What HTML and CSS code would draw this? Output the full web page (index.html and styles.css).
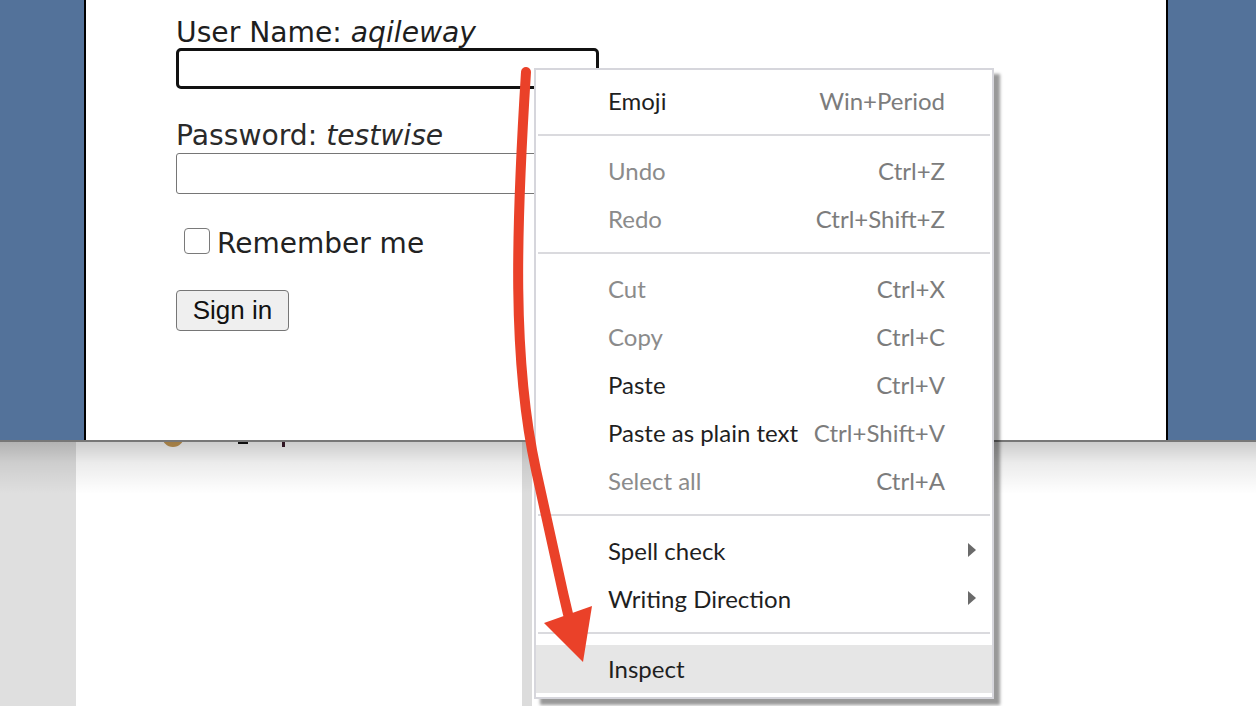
FILE: index.html
```html
<!DOCTYPE html>
<html>
<head>
<meta charset="utf-8">
<title>Sign in</title>
<link rel="stylesheet" href="styles.css">
</head>
<body>
<div class="top">
  <div class="panel">
    <form class="login">
      <div class="field">
        <label class="label">User Name: <i>aqileway</i></label>
        <input class="input input-focus" type="text">
      </div>
      <div class="field field-pw">
        <label class="label">Password: <i>testwise</i></label>
        <input class="input" type="password">
      </div>
      <div class="remember">
        <input class="check" type="checkbox">
        <span class="remember-text">Remember me</span>
      </div>
      <button class="signin" type="button">Sign in</button>
    </form>
  </div>
</div>
<div class="bottom">
  <div class="side"></div>
  <div class="main">
    <div class="peek">
      <span class="peek-dot"></span>
      <span class="peek-dash"></span>
      <span class="peek-tick"></span>
    </div>
  </div>
  <div class="gutter"></div>
  <div class="rest"></div>
  <div class="shade"></div>
</div>

<div class="menu">
  <div class="item"><span class="name">Emoji</span><span class="key">Win+Period</span></div>
  <div class="sep"></div>
  <div class="item off"><span class="name">Undo</span><span class="key">Ctrl+Z</span></div>
  <div class="item off"><span class="name">Redo</span><span class="key">Ctrl+Shift+Z</span></div>
  <div class="sep"></div>
  <div class="item off"><span class="name">Cut</span><span class="key">Ctrl+X</span></div>
  <div class="item off"><span class="name">Copy</span><span class="key">Ctrl+C</span></div>
  <div class="item"><span class="name">Paste</span><span class="key">Ctrl+V</span></div>
  <div class="item"><span class="name">Paste as plain text</span><span class="key">Ctrl+Shift+V</span></div>
  <div class="item off"><span class="name">Select all</span><span class="key">Ctrl+A</span></div>
  <div class="sep"></div>
  <div class="item sub"><span class="name">Spell check</span><span class="caret"></span></div>
  <div class="item sub"><span class="name">Writing Direction</span><span class="caret"></span></div>
  <div class="sep"></div>
  <div class="item hover"><span class="name">Inspect</span></div>
</div>

<svg class="arrow" width="1256" height="706" viewBox="0 0 1256 706">
  <path d="M526,72 C516,230 512,360 536,470 S 560,580 568,614" fill="none" stroke="#ea4129" stroke-width="10" stroke-linecap="round"/>
  <polygon points="544,623 592,606 583,662" fill="#ea4129"/>
</svg>
</body>
</html>
```
FILE: styles.css
```css
* { box-sizing: border-box; }
html, body { margin: 0; padding: 0; }
body {
  width: 1256px;
  height: 706px;
  overflow: hidden;
  background: #ffffff;
  position: relative;
  font-family: "DejaVu Sans", Verdana, sans-serif;
}

.top {
  height: 440px;
  background: #53729a;
  padding-left: 84px;
}
.panel {
  width: 1084px;
  height: 440px;
  background: #ffffff;
  border-left: 2px solid #000;
  border-right: 2px solid #000;
  padding: 18px 0 0 90px;
}
.login {
  display: flex;
  flex-direction: column;
  align-items: flex-start;
}
.field {
  display: flex;
  flex-direction: column;
}
.field-pw { margin-top: 32px; }
.label {
  font-size: 28.2px;
  line-height: 30px;
  color: #1e1e1e;
}
.field-pw .label { margin-bottom: 2px; color: #2a2a2a; }
.label i { font-style: italic; }
.input {
  width: 423px;
  height: 41px;
  margin: 0;
  border: 1.5px solid #767676;
  border-radius: 3px;
  background: #fff;
  outline: none;
}
.input-focus {
  border: 3px solid #111;
  border-radius: 5px;
}
.remember {
  display: flex;
  align-items: flex-start;
  margin-top: 34px;
}
.check {
  appearance: none;
  -webkit-appearance: none;
  width: 26px;
  height: 26px;
  margin: 0 7px 0 8px;
  border: 1.5px solid #7a7a7a;
  border-radius: 4px;
  background: #fff;
}
.remember-text {
  font-size: 28px;
  line-height: 30px;
  margin-top: 1px;
  color: #222;
}
.signin {
  margin-top: 31px;
  width: 113px;
  height: 41px;
  padding: 0;
  background: #efefef;
  border: 1.5px solid #767676;
  border-radius: 4px;
  font-family: "Liberation Sans", Arial, sans-serif;
  font-size: 26px;
  color: #111;
}

.bottom {
  position: relative;
  height: 266px;
  border-top: 2px solid #777;
  display: grid;
  grid-template-columns: 76px 446px 10px 1fr;
  overflow: hidden;
}
.side { background: #dfdfdf; }
.main { background: #fff; }
.gutter { background: #dcdcdc; }
.rest { background: #fff; }
.shade {
  position: absolute;
  left: 0; top: 0; right: 0;
  height: 52px;
  background: linear-gradient(rgba(0,0,0,0.2), rgba(0,0,0,0.08) 40%, rgba(0,0,0,0));
}
.peek {
  display: flex;
  align-items: flex-start;
  padding-left: 86px;
}
.peek-dot {
  width: 22px;
  height: 22px;
  margin-top: -17px;
  border-radius: 50%;
  background: #c79a55;
}
.peek-dash {
  width: 10px;
  height: 2px;
  margin-left: 54px;
  background: #111;
}
.peek-tick {
  width: 3px;
  height: 5px;
  margin-left: 34px;
  background: #3a1a2a;
}

.menu {
  position: absolute;
  left: 534px;
  top: 68px;
  width: 460px;
  height: 631px;
  background: #fff;
  border: 2px solid #d6d6dc;
  padding: 7px 0 3px 0;
  display: flex;
  flex-direction: column;
  box-shadow: 6px 6px 3px rgba(0,0,0,0.4);
  font-family: Lato, "Open Sans", sans-serif;
  font-size: 24px;
  z-index: 2;
}
.item {
  height: 48px;
  flex: none;
  display: flex;
  align-items: center;
  justify-content: space-between;
  padding: 0 47px 2px 72px;
  color: #1f1f1f;
}
.item .key { color: #7c7c7c; }
.item.off .name { color: #8b8b8b; }
.item.sub { padding-right: 16px; }
.item.hover { background: #e6e6e6; }
.caret {
  width: 0;
  height: 0;
  border-top: 7px solid transparent;
  border-bottom: 7px solid transparent;
  border-left: 8px solid #6a6a6a;
}
.sep {
  flex: none;
  height: 2px;
  margin: 9px 2px 11px 2px;
  background: #dadade;
}

.arrow {
  position: absolute;
  left: 0;
  top: 0;
  z-index: 3;
  pointer-events: none;
}
```
